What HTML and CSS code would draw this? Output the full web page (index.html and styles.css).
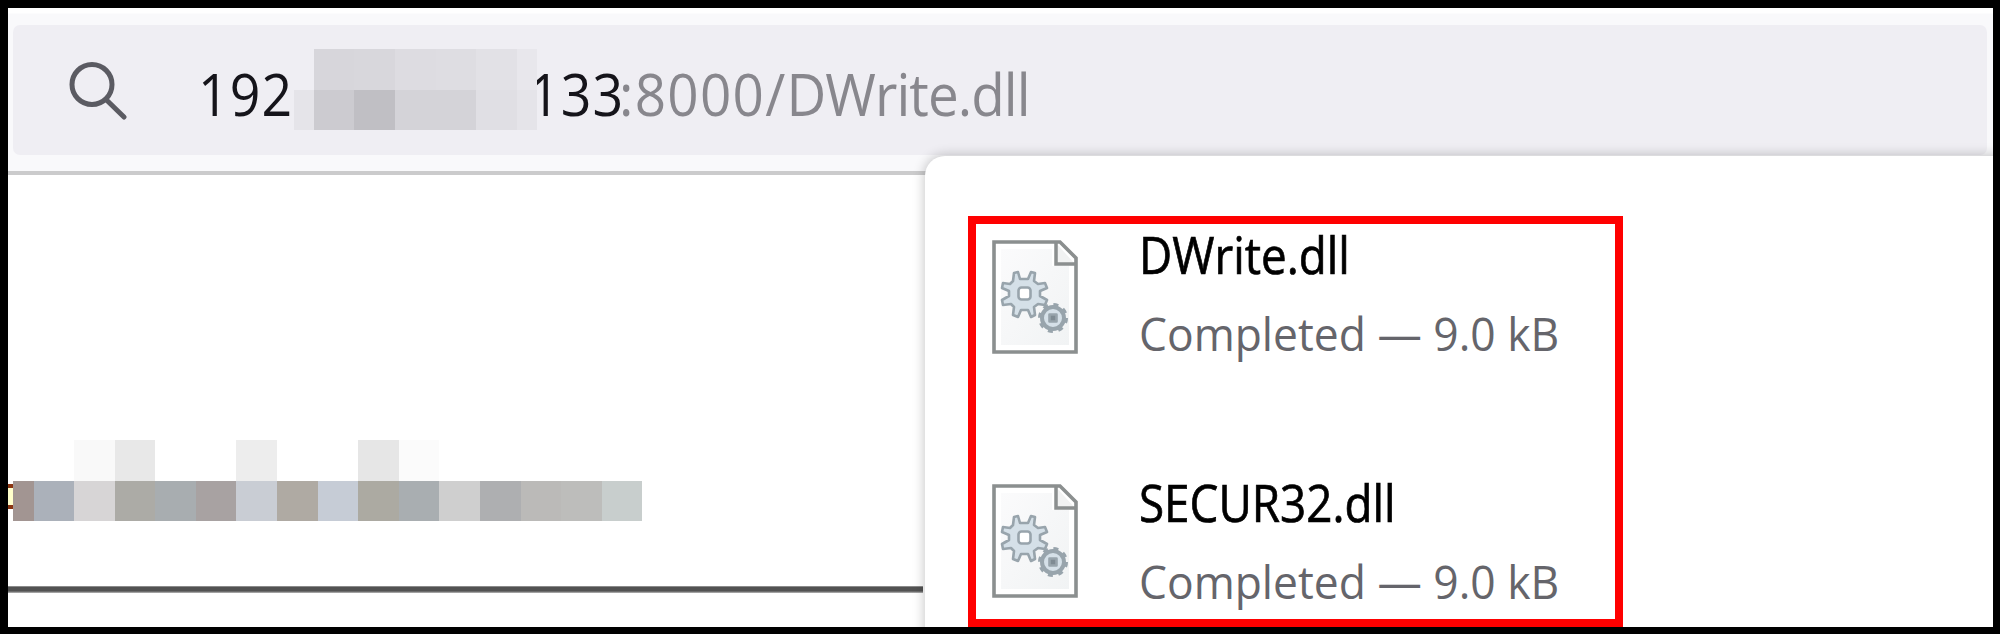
FILE: index.html
```html
<!DOCTYPE html>
<html lang="en">
<head>
<meta charset="utf-8">
<title>Downloads</title>
<link rel="stylesheet" href="styles.css">
</head>
<body>
<svg class="defs" width="0" height="0" aria-hidden="true">
  <defs>
    <linearGradient id="paper" x1="0" y1="0" x2="1" y2="1"><stop offset="0" stop-color="#fbfbfc"/><stop offset="1" stop-color="#f1f3f4"/></linearGradient>
    <symbol id="dll" viewBox="0 0 86 114">
      <path d="M2 2H68L84 18V112H2Z" fill="#fff" stroke="#8b8f8f" stroke-width="3.6"/>
      <path d="M9 9H60V26H77V105H9Z" fill="url(#paper)"/>
      <path d="M64 3V24H83" fill="#f1f2f2" stroke="#8b8f8f" stroke-width="3.5"/>
      <g fill="#d5e0e8" stroke="#98a4ac" stroke-width="2.6" stroke-linejoin="round">
        <path d="M28 39L26 32L22 33L21 41L18 44L11 43L10 48L17 51V56L10 60L11 65L19 64L22 67L21 75L26 77L29 70H36L39 77L43 75L42 67L46 64L53 65L55 60L48 56V51L55 48L53 43L46 44L42 41L43 33L39 32L36 39Z"/>
        <rect x="26.500" y="47.500" width="12" height="12" rx="3" fill="#fff"/>
        <circle cx="61" cy="78" r="13.500" fill="none" stroke-width="3" stroke-dasharray="5 5.600"/>
        <circle cx="61" cy="78" r="11" stroke-width="4"/>
        <rect x="57.500" y="74.500" width="7" height="7" fill="#7f8b93"/>
      </g>
    </symbol>
  </defs>
</svg>
<div class="frame">
  <header class="toolbar">
    <div class="urlbar">
      <svg class="search" viewBox="0 0 58 60"><circle cx="23" cy="24.500" r="20"/><path d="M37.500 40L55 57"/></svg>
      <span class="host"><span class="run host-a">192</span></span>
      <div class="mask">
        <i class="m0"></i><i class="m1"></i><i class="m2"></i><i class="m3"></i><i class="m4"></i><i class="m5"></i><i class="m6"></i>
        <i class="n0"></i><i class="n1"></i><i class="n2"></i><i class="n3"></i><i class="n4"></i><i class="n5"></i><i class="n6"></i>
      </div>
      <span class="tail"><span class="run host-b">133</span></span>
      <span class="path"><span class="run path-run"><span class="port">:8000/</span><span class="file">DWrite.dll</span></span></span>
    </div>
  </header>
  <main class="page">
    <div class="row-mosaic">
      <i class="frag"></i>
      <div class="cells">
        <i></i><i></i><i class="t1"></i><i class="t2"></i><i></i><i></i><i class="t3"></i><i></i><i></i><i class="t4"></i><i class="t5"></i><i></i><i></i><i></i><i></i><i></i>
        <i class="b0"></i><i class="b1"></i><i class="b2"></i><i class="b3"></i><i class="b4"></i><i class="b5"></i><i class="b6"></i><i class="b7"></i><i class="b8"></i><i class="b9"></i><i class="b10"></i><i class="b11"></i><i class="b12"></i><i class="b13"></i><i class="b14"></i><i class="b15"></i>
      </div>
    </div>
    <div class="rule"></div>
  </main>
  <section class="panel">
    <div class="highlight">
      <div class="icons"><svg><use href="#dll"/></svg><svg><use href="#dll"/></svg></div>
      <div class="items">
        <div class="item"><div class="name"><span class="run name-a">DWrite.dll</span></div><div class="status"><span class="run status-run">Completed — 9.0 kB</span></div></div>
        <div class="item"><div class="name"><span class="run name-b">SECUR32.dll</span></div><div class="status"><span class="run status-run">Completed — 9.0 kB</span></div></div>
      </div>
    </div>
  </section>
</div>
</body>
</html>
```
FILE: styles.css
```css
* { box-sizing: border-box; }
body { margin: 0; background: #000; font-family: "Open Sans", "Noto Sans", sans-serif; }
i { display: block; }
.defs { position: absolute; }
.frame { position: relative; width: 2000px; height: 634px; border: 8px solid #000; border-right-width: 7px; border-bottom-width: 7px; background: #fff; overflow: hidden; display: flex; flex-direction: column; }
.toolbar { height: 167px; flex: none; padding: 6px 6px 0 5px; background: linear-gradient(#fff 5px, #f9f9fb 6px); border-bottom: 4px solid #cbcbcc; }
.urlbar { margin-top: 11px; height: 130px; border-radius: 7px; background: #efeef3; display: flex; align-items: flex-start; }
.search { width: 58px; height: 60px; margin: 35px 0 0 56px; flex: none; fill: none; stroke: #5b5b62; stroke-width: 5; stroke-linecap: round; }
.run { display: inline-block; white-space: nowrap; transform-origin: 0 0; }
.host, .tail, .path { font-size: 58px; line-height: 80px; margin-top: 29px; height: 80px; flex: none; color: #15141a; }
.host { width: 95.500px; margin-left: 71px; }
.tail { width: 90px; margin-left: -8px; }
.path { color: #88878d; }
.host-a, .host-b { transform: scaleX(.925); letter-spacing: 1.200px; }
.path-run { transform: scaleX(.945); }
.port { letter-spacing: 1.350px; }
.file { letter-spacing: -1px; }
.mask { position: relative; z-index: 1; width: 243.500px; margin-top: 24px; flex: none; display: grid; grid-template-columns: 20px repeat(5, 40.700px) 20px; grid-template-rows: 41px 40px; }
.m0 { background: #efeef3; } .m1 { background: #d7d6db; } .m2 { background: #d8d7dc; } .m3 { background: #dddce1; } .m4 { background: #dedde2; } .m5 { background: #e2e1e6; } .m6 { background: #e8e7ec; }
.n0 { background: #e5e4e9; } .n1 { background: #cccbd0; } .n2 { background: #c0bfc4; } .n3, .n4 { background: #d4d3d8; } .n5 { background: #e0dfe4; } .n6 { background: #e5e4e9; }
.page { flex: 1; padding-top: 265px; }
.row-mosaic { display: flex; height: 81px; }
.frag { width: 5px; height: 25px; margin-top: 44px; background: #ffffcb; border: solid #8a3411; border-width: 4px 0; }
.cells { display: grid; grid-template-columns: 20.500px repeat(15, 40.600px); grid-template-rows: 40.500px 40px; }
.t1 { background: #f9f9f9; } .t2 { background: #e8e8e8; } .t3 { background: #ededed; } .t4 { background: #e6e6e6; } .t5 { background: #fbfbfb; }
.b0 { background: #a29592; } .b1 { background: #abb1ba; } .b2 { background: #d7d5d6; } .b3 { background: #acaba6; }
.b4 { background: #a8adb0; } .b5 { background: #a8a2a2; } .b6 { background: #c9cdd4; } .b7 { background: #afaaa3; }
.b8 { background: #c6ccd6; } .b9 { background: #acaaa2; } .b10 { background: #a9aeb1; } .b11 { background: #cfcfcf; }
.b12 { background: #aeafb1; } .b13 { background: #bbbab8; } .b14 { background: #bdbdbb; } .b15 { background: #c8cecd; }
.rule { margin-top: 65px; height: 7px; width: 915px; background: linear-gradient(#8a8a8a 1px, #525252 1px 5px, #888 6px, #bbb 7px); }
.panel { position: absolute; left: 917px; top: 148px; width: 1100px; height: 600px; background: #fff; border-radius: 20px 0 0 0; box-shadow: 0 0 12px 1px rgba(0,0,0,.22); padding: 60px 0 0 43px; }
.highlight { width: 655px; height: 411px; border: 8px solid #f00; padding: 16px 0 0 16px; display: flex; }
.icons { display: flex; flex-direction: column; gap: 130px; flex: none; }
.icons svg { width: 86px; height: 114px; display: block; }
.items { margin: -21px 0 0 61px; flex: none; }
.item { height: 248px; }
.name { height: 70px; font-size: 52px; line-height: 70px; color: #000; -webkit-text-stroke: .7px #000; }
.status { height: 64px; margin-top: 13px; font-size: 45px; line-height: 64px; color: #65656b; }
.name-a { transform: scaleX(.88); }
.name-b { transform: scaleX(.881); }
.status-run { transform: scaleX(.986); }
```
